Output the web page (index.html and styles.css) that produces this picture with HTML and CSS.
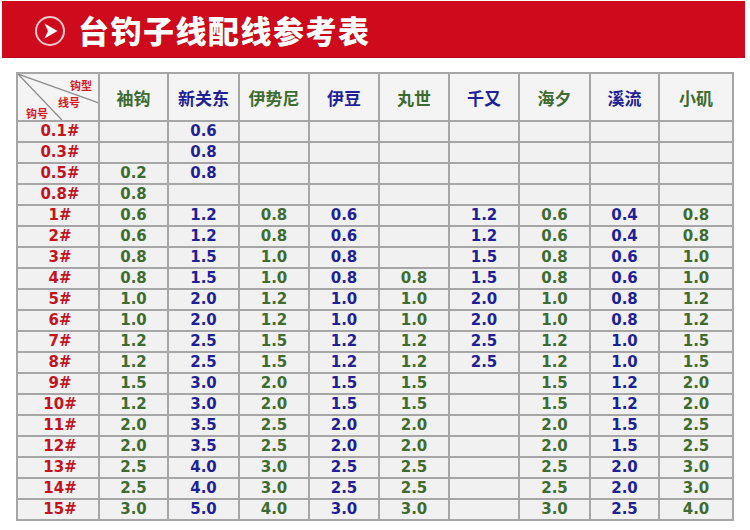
FILE: index.html
```html
<!DOCTYPE html>
<html lang="zh">
<head>
<meta charset="utf-8">
<title>台钓子线配线参考表</title>
<link rel="stylesheet" href="styles.css">
</head>
<body>
<div class="banner">
  <svg class="banner-icon" viewBox="0 0 32 32" width="32" height="32">
    <circle cx="16" cy="16" r="14" fill="none" stroke="#f6c9cc" stroke-width="2"/>
    <path d="M10.5 8.5 L23.5 16 L10.5 23.5 L14 16 Z" fill="#ffffff"/>
  </svg>
  <h1 class="banner-title">台钓子线配线参考表</h1>
</div>

<table class="chart">
  <colgroup>
    <col class="c-hook"><col class="c69"><col class="c71"><col class="c70"><col class="c70"><col class="c70"><col class="c70"><col class="c71"><col class="c69"><col class="c74">
  </colgroup>
  <thead>
    <tr>
      <th class="corner">
        <svg class="corner-lines" viewBox="0 0 82 48" preserveAspectRatio="none">
          <line x1="0" y1="0" x2="82" y2="30" stroke="#8a8a8a" stroke-width="1.3"/>
          <line x1="0" y1="0" x2="45" y2="48" stroke="#8a8a8a" stroke-width="1.3"/>
        </svg>
        <span class="lbl lbl-type">钩型</span>
        <span class="lbl lbl-line">线号</span>
        <span class="lbl lbl-hook">钩号</span>
      </th>
      <th class="g">袖钩</th>
      <th class="b">新关东</th>
      <th class="g">伊势尼</th>
      <th class="b">伊豆</th>
      <th class="g">丸世</th>
      <th class="b">千又</th>
      <th class="g">海夕</th>
      <th class="b">溪流</th>
      <th class="g">小矶</th>
    </tr>
  </thead>
  <tbody>
    <tr><td class="h">0.1#</td><td class="g"></td><td class="b">0.6</td><td class="g"></td><td class="b"></td><td class="g"></td><td class="b"></td><td class="g"></td><td class="b"></td><td class="g"></td></tr>
    <tr><td class="h">0.3#</td><td class="g"></td><td class="b">0.8</td><td class="g"></td><td class="b"></td><td class="g"></td><td class="b"></td><td class="g"></td><td class="b"></td><td class="g"></td></tr>
    <tr><td class="h">0.5#</td><td class="g">0.2</td><td class="b">0.8</td><td class="g"></td><td class="b"></td><td class="g"></td><td class="b"></td><td class="g"></td><td class="b"></td><td class="g"></td></tr>
    <tr><td class="h">0.8#</td><td class="g">0.8</td><td class="b"></td><td class="g"></td><td class="b"></td><td class="g"></td><td class="b"></td><td class="g"></td><td class="b"></td><td class="g"></td></tr>
    <tr><td class="h">1#</td><td class="g">0.6</td><td class="b">1.2</td><td class="g">0.8</td><td class="b">0.6</td><td class="g"></td><td class="b">1.2</td><td class="g">0.6</td><td class="b">0.4</td><td class="g">0.8</td></tr>
    <tr><td class="h">2#</td><td class="g">0.6</td><td class="b">1.2</td><td class="g">0.8</td><td class="b">0.6</td><td class="g"></td><td class="b">1.2</td><td class="g">0.6</td><td class="b">0.4</td><td class="g">0.8</td></tr>
    <tr><td class="h">3#</td><td class="g">0.8</td><td class="b">1.5</td><td class="g">1.0</td><td class="b">0.8</td><td class="g"></td><td class="b">1.5</td><td class="g">0.8</td><td class="b">0.6</td><td class="g">1.0</td></tr>
    <tr><td class="h">4#</td><td class="g">0.8</td><td class="b">1.5</td><td class="g">1.0</td><td class="b">0.8</td><td class="g">0.8</td><td class="b">1.5</td><td class="g">0.8</td><td class="b">0.6</td><td class="g">1.0</td></tr>
    <tr><td class="h">5#</td><td class="g">1.0</td><td class="b">2.0</td><td class="g">1.2</td><td class="b">1.0</td><td class="g">1.0</td><td class="b">2.0</td><td class="g">1.0</td><td class="b">0.8</td><td class="g">1.2</td></tr>
    <tr><td class="h">6#</td><td class="g">1.0</td><td class="b">2.0</td><td class="g">1.2</td><td class="b">1.0</td><td class="g">1.0</td><td class="b">2.0</td><td class="g">1.0</td><td class="b">0.8</td><td class="g">1.2</td></tr>
    <tr><td class="h">7#</td><td class="g">1.2</td><td class="b">2.5</td><td class="g">1.5</td><td class="b">1.2</td><td class="g">1.2</td><td class="b">2.5</td><td class="g">1.2</td><td class="b">1.0</td><td class="g">1.5</td></tr>
    <tr><td class="h">8#</td><td class="g">1.2</td><td class="b">2.5</td><td class="g">1.5</td><td class="b">1.2</td><td class="g">1.2</td><td class="b">2.5</td><td class="g">1.2</td><td class="b">1.0</td><td class="g">1.5</td></tr>
    <tr><td class="h">9#</td><td class="g">1.5</td><td class="b">3.0</td><td class="g">2.0</td><td class="b">1.5</td><td class="g">1.5</td><td class="b"></td><td class="g">1.5</td><td class="b">1.2</td><td class="g">2.0</td></tr>
    <tr><td class="h">10#</td><td class="g">1.2</td><td class="b">3.0</td><td class="g">2.0</td><td class="b">1.5</td><td class="g">1.5</td><td class="b"></td><td class="g">1.5</td><td class="b">1.2</td><td class="g">2.0</td></tr>
    <tr><td class="h">11#</td><td class="g">2.0</td><td class="b">3.5</td><td class="g">2.5</td><td class="b">2.0</td><td class="g">2.0</td><td class="b"></td><td class="g">2.0</td><td class="b">1.5</td><td class="g">2.5</td></tr>
    <tr><td class="h">12#</td><td class="g">2.0</td><td class="b">3.5</td><td class="g">2.5</td><td class="b">2.0</td><td class="g">2.0</td><td class="b"></td><td class="g">2.0</td><td class="b">1.5</td><td class="g">2.5</td></tr>
    <tr><td class="h">13#</td><td class="g">2.5</td><td class="b">4.0</td><td class="g">3.0</td><td class="b">2.5</td><td class="g">2.5</td><td class="b"></td><td class="g">2.5</td><td class="b">2.0</td><td class="g">3.0</td></tr>
    <tr><td class="h">14#</td><td class="g">2.5</td><td class="b">4.0</td><td class="g">3.0</td><td class="b">2.5</td><td class="g">2.5</td><td class="b"></td><td class="g">2.5</td><td class="b">2.0</td><td class="g">3.0</td></tr>
    <tr><td class="h">15#</td><td class="g">3.0</td><td class="b">5.0</td><td class="g">4.0</td><td class="b">3.0</td><td class="g">3.0</td><td class="b"></td><td class="g">3.0</td><td class="b">2.5</td><td class="g">4.0</td></tr>
  </tbody>
</table>
</body>
</html>
```

FILE: styles.css
```css
html, body {
  margin: 0;
  padding: 0;
  background: #ffffff;
}

body {
  width: 750px;
  height: 530px;
  overflow: hidden;
  font-family: "DejaVu Sans", "Noto Sans CJK SC", sans-serif;
}

.banner {
  margin: 1px 5px 0 2px;
  height: 57px;
  background: #cf0a1d;
  display: flex;
  align-items: center;
  padding-left: 32px;
  box-sizing: border-box;
  border-bottom: 1px solid #b80517;
}

.banner-icon {
  display: block;
  flex: none;
  margin-top: 4px;
}

.banner-title {
  margin: 0 0 0 12px;
  color: #ffffff;
  font-family: "Noto Sans CJK SC", sans-serif;
  font-weight: 900;
  font-size: 31px;
  letter-spacing: 1.5px;
  line-height: 1;
  text-shadow: 0 0 1px rgba(120, 0, 0, 0.6);
}

.chart {
  margin: 14px 0 0 16px;
  border-collapse: collapse;
  table-layout: fixed;
  width: 716px;
  background: #f2f2f2;
  border: 2px solid #9a9a9a;
}

.c-hook { width: 82px; }
.c69 { width: 69px; }
.c70 { width: 70px; }
.c71 { width: 71px; }
.c74 { width: 74px; }

.chart th,
.chart td {
  border: 2px solid #a6a6a6;
  padding: 0;
  text-align: center;
  vertical-align: middle;
}

.chart thead tr {
  height: 48px;
}

.chart th {
  background: #f4f4f4;
  font-family: "Noto Sans CJK SC", sans-serif;
  font-weight: 700;
  font-size: 17px;
}

.chart tbody tr {
  height: 21px;
}

.chart td {
  font-family: "DejaVu Sans", sans-serif;
  font-weight: 700;
  font-size: 15px;
  line-height: 17px;
  background: #f1f1f1;
}

.chart .h {
  color: #c3131f;
  padding-left: 4px;
}

.g { color: #3e6c30; }
.b { color: #1f1f96; }

.corner {
  position: relative;
  overflow: hidden;
}

.corner-lines {
  position: absolute;
  left: 0;
  top: 0;
  width: 100%;
  height: 100%;
}

.lbl {
  position: absolute;
  color: #d21b26;
  font-size: 11px;
  font-weight: 700;
  line-height: 1;
}

.lbl-type { right: 6px; top: 6px; }
.lbl-line { left: 40px; top: 23px; }
.lbl-hook { left: 8px; top: 34px; }
```
